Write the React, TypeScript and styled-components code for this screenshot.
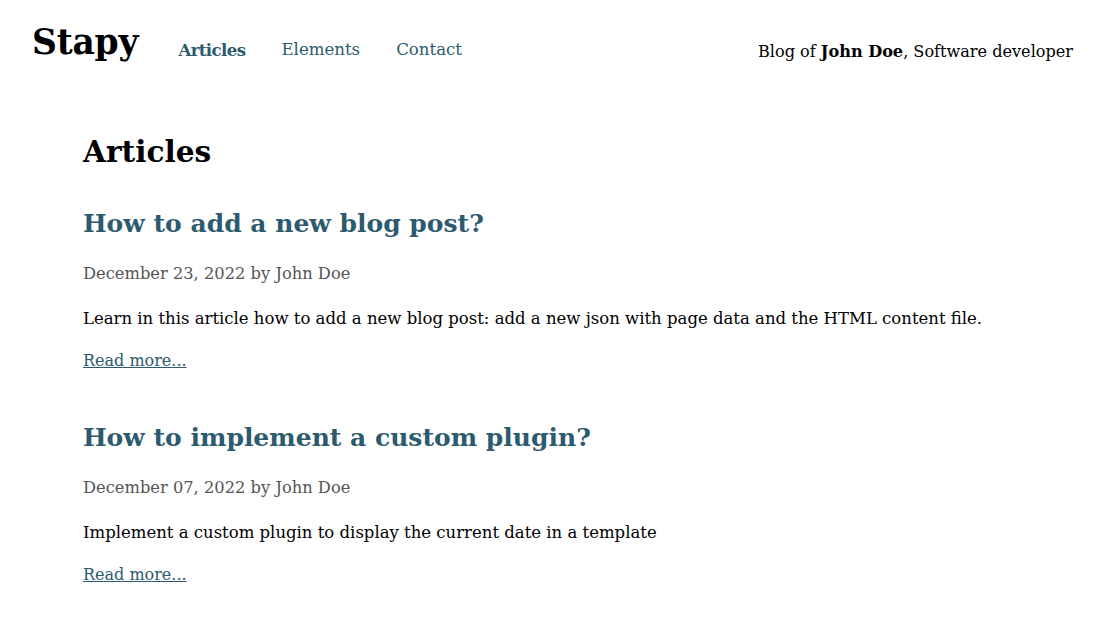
import React from "react";
import styled, { createGlobalStyle } from "styled-components";

const Global = createGlobalStyle`
  html, body { margin: 0; padding: 0; background: #fff; }
  body { font-family: "DejaVu Serif", "Liberation Serif", serif; color: #000; }
`;

const LINK = "#2c5a6e";

const Header = styled.header`
  display: flex;
  align-items: flex-start;
  padding: 0 32px;
  height: 90px;
`;

const Logo = styled.a`
  display: block;
  font-size: 34.5px;
  line-height: 40px;
  margin-top: 22px;
  font-weight: 700;
  color: #000;
  text-decoration: none;
  margin-right: 40px;
  letter-spacing: -0.2px;
`;

const Nav = styled.nav`
  display: flex;
  gap: 36px;
  margin-top: 40px;
  flex: 1;
`;

const NavLink = styled.a<{ $active?: boolean }>`
  font-size: 16.6px;
  line-height: 20px;
  color: ${LINK};
  text-decoration: none;
  font-weight: ${(p) => (p.$active ? 700 : 400)};
  letter-spacing: ${(p) => (p.$active ? "-0.6px" : "0")};
`;

const Tagline = styled.div`
  font-size: 16.1px;
  line-height: 20px;
  margin-top: 42px;
`;

const Main = styled.main`
  padding: 42px 83px 0 83px;
`;

const PageTitle = styled.h1`
  font-size: 29.6px;
  line-height: 40px;
  font-weight: 700;
  margin: 0 0 34px 0;
`;

const Article = styled.article`
  margin-bottom: 47px;
`;

const Title = styled.h2`
  font-size: 25px;
  line-height: 36px;
  font-weight: 700;
  color: ${LINK};
  margin: 0 0 20px 0;
`;

const Meta = styled.p`
  font-size: 16.3px;
  line-height: 24px;
  color: #555;
  margin: 0 0 21px 0;
`;

const Desc = styled.p`
  font-size: 16.5px;
  line-height: 24px;
  margin: 0 0 18px 0;
`;

const ReadMore = styled.a`
  display: inline-block;
  font-size: 16px;
  line-height: 24px;
  color: ${LINK};
  text-decoration: underline;
`;

const articles = [
  {
    title: "How to add a new blog post?",
    date: "December 23, 2022",
    desc: "Learn in this article how to add a new blog post: add a new json with page data and the HTML content file.",
  },
  {
    title: "How to implement a custom plugin?",
    date: "December 07, 2022",
    desc: "Implement a custom plugin to display the current date in a template",
  },
];

export default function App() {
  return (
    <>
      <Global />
      <Header>
        <Logo href="#">Stapy</Logo>
        <Nav>
          <NavLink href="#" $active>Articles</NavLink>
          <NavLink href="#">Elements</NavLink>
          <NavLink href="#">Contact</NavLink>
        </Nav>
        <Tagline>
          Blog of <b>John Doe</b>, Software developer
        </Tagline>
      </Header>
      <Main>
        <PageTitle>Articles</PageTitle>
        {articles.map((a) => (
          <Article key={a.title}>
            <Title>{a.title}</Title>
            <Meta>{a.date} by John Doe</Meta>
            <Desc>{a.desc}</Desc>
            <ReadMore href="#">Read more...</ReadMore>
          </Article>
        ))}
      </Main>
    </>
  );
}
